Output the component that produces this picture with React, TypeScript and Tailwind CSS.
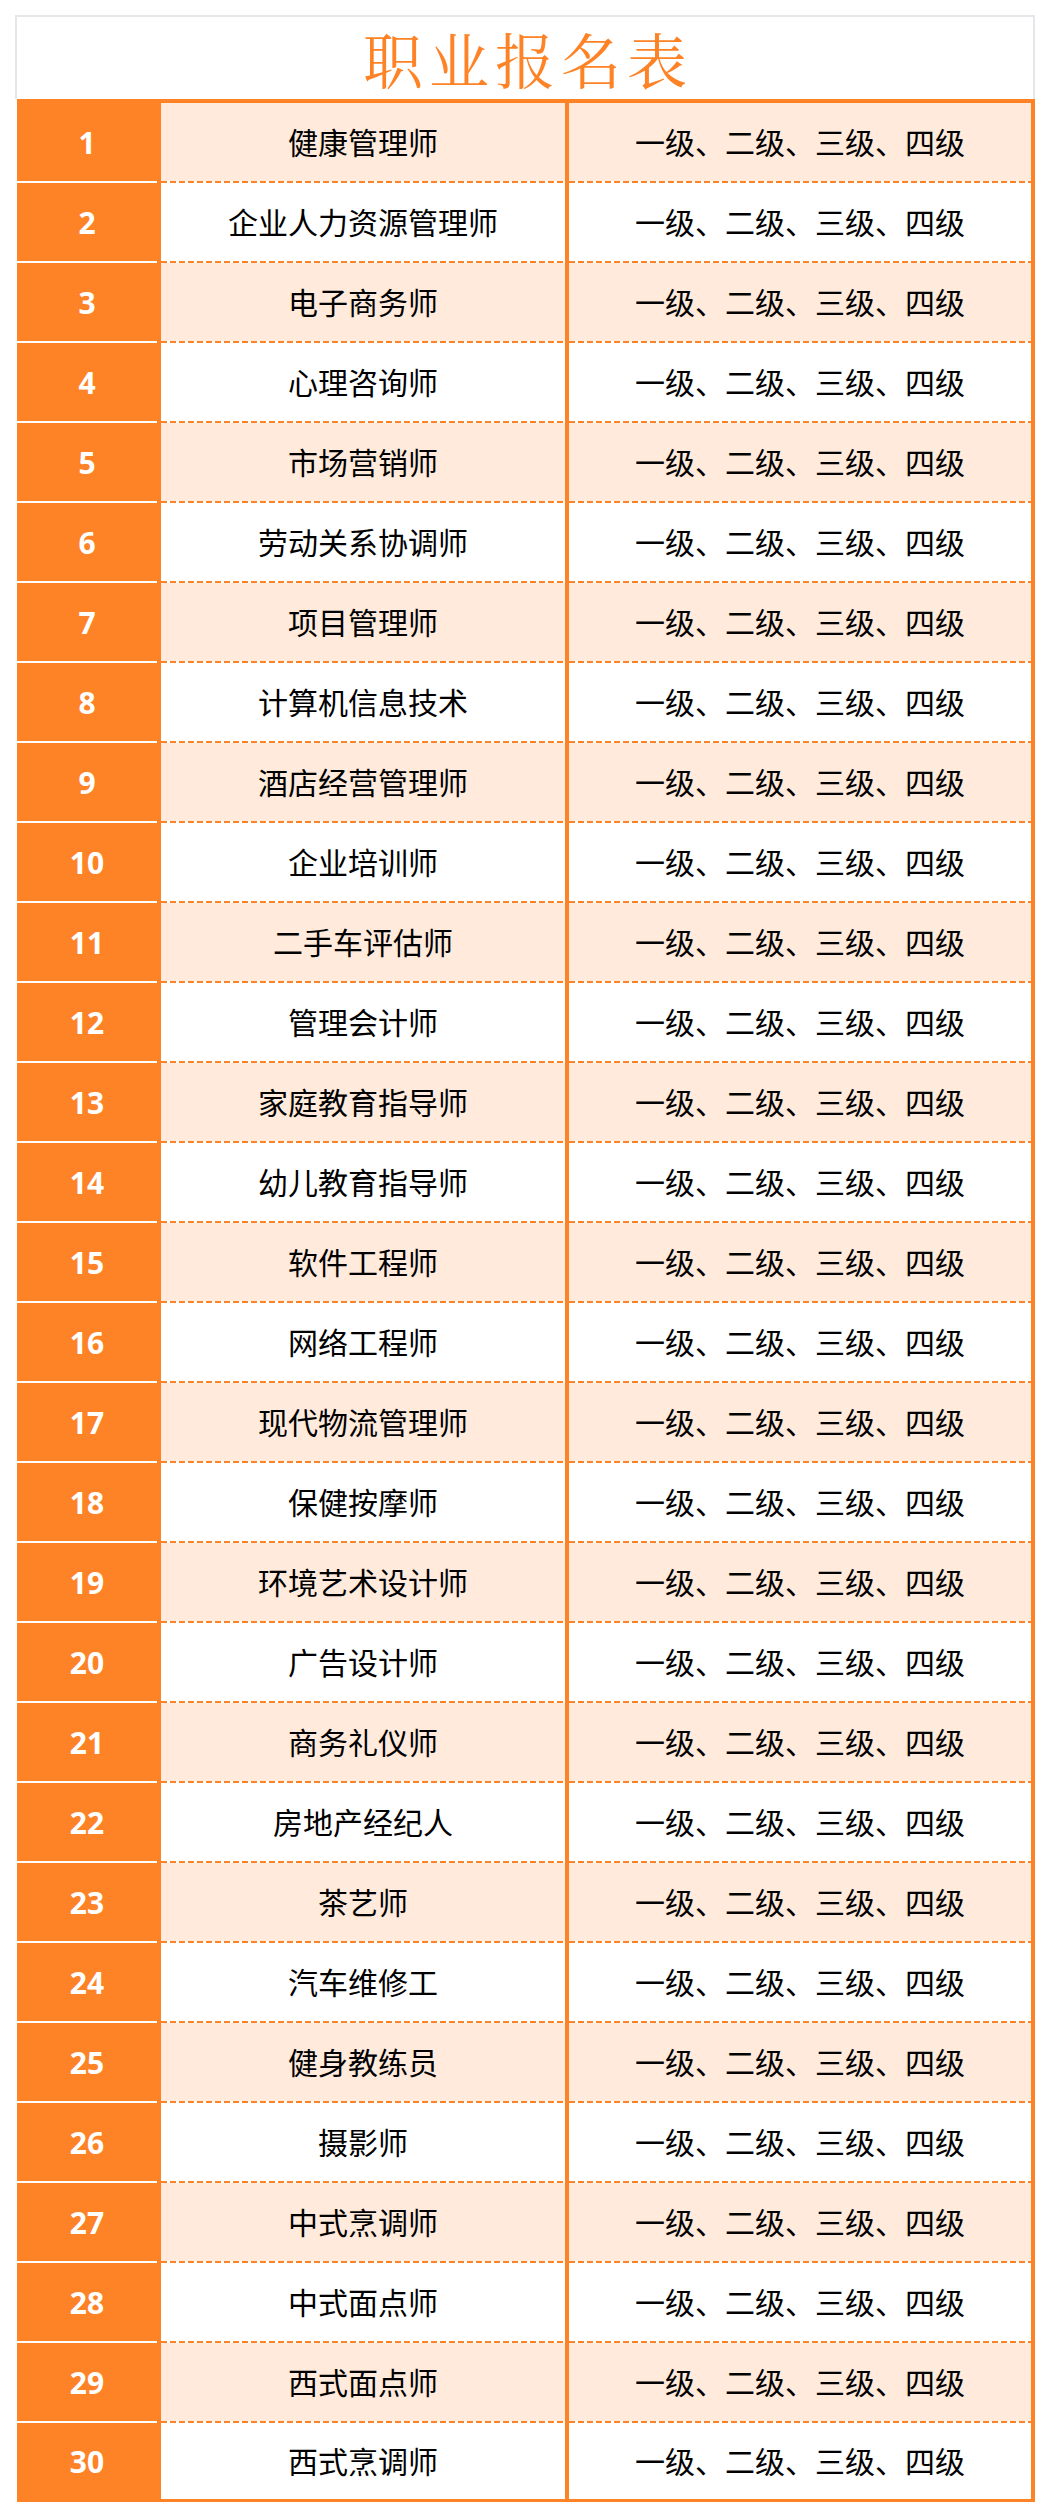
// Career registration table

const JOBS = [
  '健康管理师',
  '企业人力资源管理师',
  '电子商务师',
  '心理咨询师',
  '市场营销师',
  '劳动关系协调师',
  '项目管理师',
  '计算机信息技术',
  '酒店经营管理师',
  '企业培训师',
  '二手车评估师',
  '管理会计师',
  '家庭教育指导师',
  '幼儿教育指导师',
  '软件工程师',
  '网络工程师',
  '现代物流管理师',
  '保健按摩师',
  '环境艺术设计师',
  '广告设计师',
  '商务礼仪师',
  '房地产经纪人',
  '茶艺师',
  '汽车维修工',
  '健身教练员',
  '摄影师',
  '中式烹调师',
  '中式面点师',
  '西式面点师',
  '西式烹调师',
];

const LEVELS = '一级、二级、三级、四级';

const Dashes = () => (
  <div className="h-[2px] w-full bg-[repeating-linear-gradient(to_right,#fe8327_0px,#fe8327_6px,transparent_6px,transparent_9px)]" />
);

const Row = ({ index, name }: { index: number; name: string }) => {
  const last = index === JOBS.length;
  const shaded = index % 2 === 1;
  const cellBg = shaded ? 'bg-[#ffeadc]' : 'bg-white';
  return (
    <div className={`flex ${last ? 'h-[76px]' : 'h-[80px]'}`}>
      <div className="flex w-[140px] flex-col bg-[#fe8327]">
        <div className="flex flex-1 items-center justify-center text-[30px] font-bold text-white">
          {index}
        </div>
        {!last && <div className="h-[2px] bg-white" />}
      </div>
      <div className="w-[4px] bg-[#fe8327]" />
      <div className="flex w-[404px] flex-col">
        <div className={`flex flex-1 items-center justify-center text-[30px] text-black ${cellBg}`}>
          {name}
        </div>
        {!last && <Dashes />}
      </div>
      <div className="w-[4px] bg-[#fe8327]" />
      <div className="flex flex-1 flex-col">
        <div className={`flex flex-1 items-center justify-center text-[30px] text-black ${cellBg}`}>
          {LEVELS}
        </div>
        {!last && <Dashes />}
      </div>
    </div>
  );
};

export default function App() {
  return (
    <div className="min-h-[2518px] bg-white pt-[15px] font-['Open_Sans','Noto_Sans_CJK_SC',sans-serif]">
      <div className="ml-[15px] w-[1020px]">
        <div className="flex h-[84px] items-center justify-center border-x-2 border-t-2 border-[#e5e7eb] pl-[6px]">
          <h1 className="font-['Noto_Serif_CJK_SC','Noto_Sans_CJK_SC',serif] text-[60px] leading-none tracking-[6px] text-[#fe8327]">
            职业报名表
          </h1>
        </div>
        <div className="ml-[2px] border-b-[3px] border-r-4 border-t-4 border-[#fe8327]">
          {JOBS.map((name, i) => (
            <Row key={name} index={i + 1} name={name} />
          ))}
        </div>
      </div>
    </div>
  );
}
